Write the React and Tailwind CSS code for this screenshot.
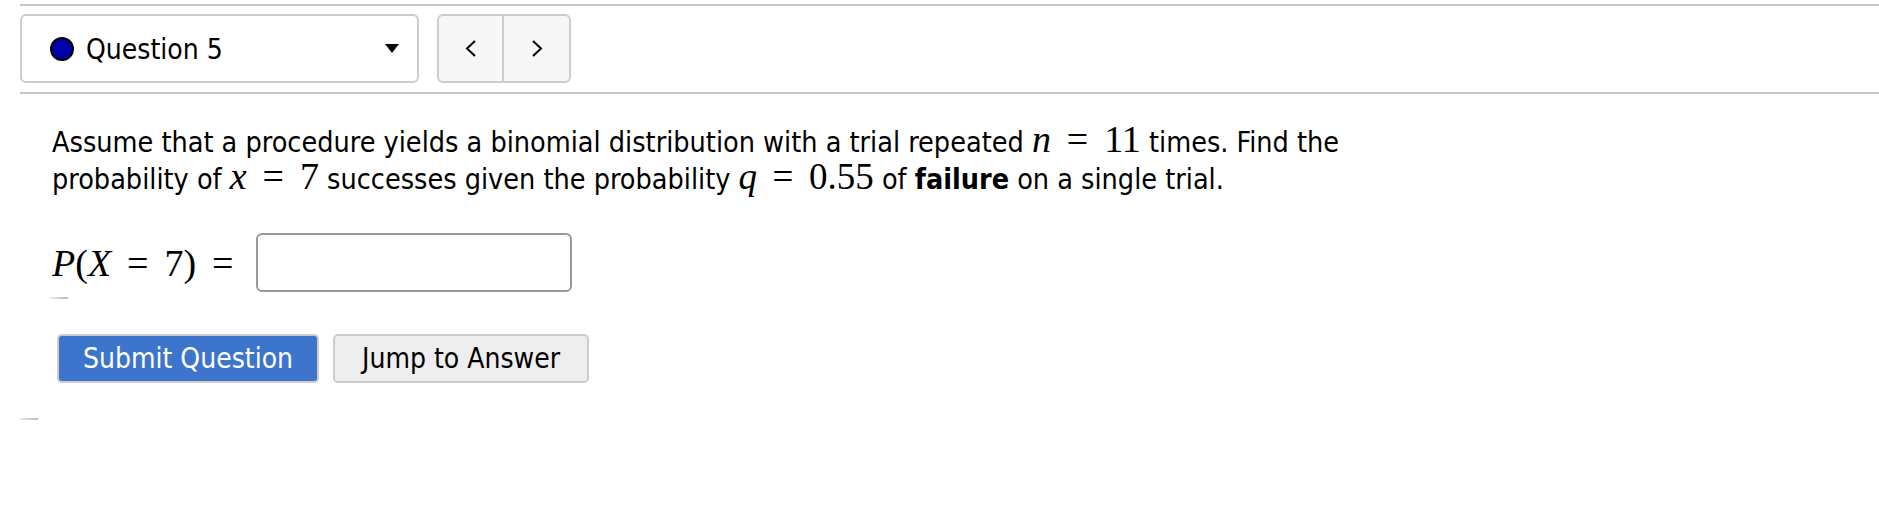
import React from "react";

const M = ({ children, className = "" }) => (
  <span className={"font-['Liberation_Serif',serif] " + className}>{children}</span>
);
const Eq = () => <span className="mx-[0.42em]">=</span>;

export default function App() {
  return (
    <div className="w-[1879px] h-[512px] bg-white pl-[20px] font-['DejaVu_Sans_Condensed','DejaVu_Sans',sans-serif] text-black overflow-hidden">
      <div className="h-[4px]" />
      <div className="border-t-2 border-[#c8c8c8]" />
      <div className="flex items-center pt-[8px] pb-[9px]">
        <div className="w-[399px] h-[69px] border-2 border-[#cccccc] rounded-[6px] flex items-center pl-[28px] pr-[18px]">
          <span className="w-[24px] h-[24px] rounded-full bg-[#0000a8] border-2 border-black" />
          <span className="ml-[12px] text-[28px] leading-[34px] mt-[2px]">Question 5</span>
          <span className="ml-auto">
            <svg width="14" height="9" viewBox="0 0 14 9"><polygon points="0,0 14,0 7,9" fill="black" /></svg>
          </span>
        </div>
        <div className="ml-[18px] w-[134px] h-[69px] border-2 border-[#cccccc] rounded-[6px] bg-[#f7f7f7] flex">
          <div className="w-[65px] flex items-center justify-center border-r-2 border-[#cccccc]">
            <svg width="12" height="17" viewBox="0 0 12 17"><polyline points="10,1 2,8.5 10,16" fill="none" stroke="black" strokeWidth="2" /></svg>
          </div>
          <div className="flex-1 flex items-center justify-center">
            <svg width="12" height="17" viewBox="0 0 12 17"><polyline points="2,1 10,8.5 2,16" fill="none" stroke="black" strokeWidth="2" /></svg>
          </div>
        </div>
      </div>
      <div className="border-t-2 border-[#c8c8c8]" />
      <div className="pl-[32px] pt-[30px] text-[28.5px] leading-[37px]">
        <p>
          Assume that a procedure yields a binomial distribution with a trial repeated{" "}
          <M className="text-[38px] leading-[20px]"><i>n</i><Eq />11</M> times. Find the
          <br />
          probability of <M className="text-[38px] leading-[20px]"><i>x</i><Eq />7</M> successes given the probability{" "}
          <M className="text-[37px] leading-[20px]"><i>q</i><Eq />0.55</M> of <b>failure</b> on a single trial.
        </p>
        <div className="flex items-center mt-[35px]">
          <M className="text-[38px] leading-[46px]"><i>P</i>(<i>X</i><Eq />7)<Eq /></M>
          <div className="ml-[7px] w-[316px] h-[59px] border-2 border-[#999999] rounded-[6px] bg-white" />
        </div>
        <div className="ml-[-2px] mt-[5px] w-[18px] h-[2px] bg-gradient-to-r from-[#e8e8e8] to-[#bbbbbb]" />
        <div className="flex gap-[14px] mt-[35px] ml-[5px]">
          <button className="w-[262px] h-[49px] rounded-[5px] border-2 border-[#cccccc] bg-[#3d74cc] text-white text-[28px] leading-[34px]">Submit Question</button>
          <button className="w-[256px] h-[49px] rounded-[5px] border-2 border-[#cccccc] bg-[#eeeeee] text-black text-[28px] leading-[34px]">Jump to Answer</button>
        </div>
      </div>
      <div className="mt-[35px] w-[18px] h-[2px] bg-gradient-to-r from-[#e8e8e8] to-[#bbbbbb]" />
    </div>
  );
}
